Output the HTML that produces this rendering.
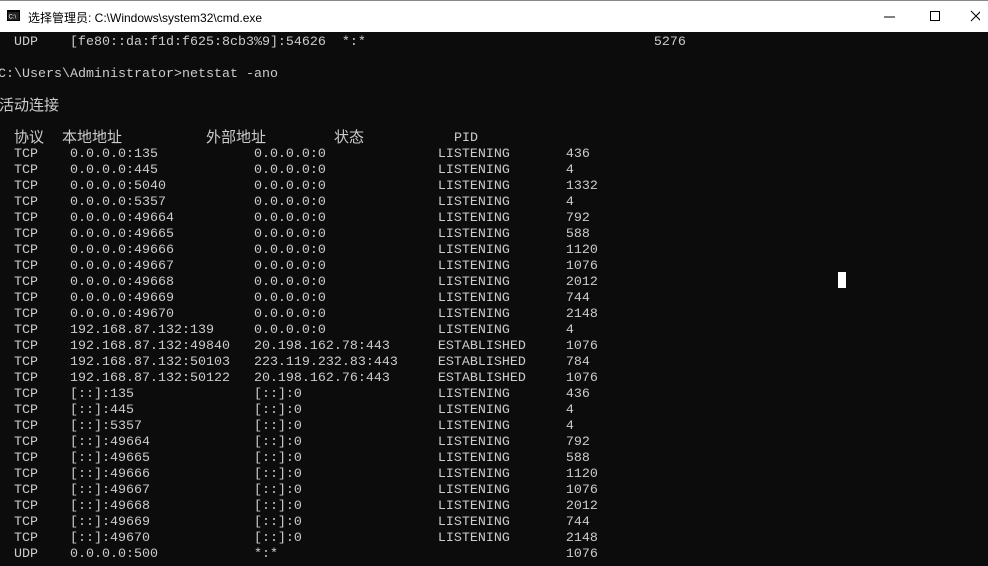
<!DOCTYPE html>
<html><head><meta charset="utf-8"><style>
body{margin:0;width:988px;height:566px;overflow:hidden;background:#0c0c0c;position:relative;font-family:"Liberation Mono",monospace}
#tb{position:absolute;left:0;top:0;width:988px;height:32px;background:#fff;border-top:1px solid #8a8a8a;box-sizing:border-box}
#tt{position:absolute;left:28px;top:8px;font:12px "Liberation Sans","Noto Sans CJK SC",sans-serif;color:#000}
#con{position:absolute;left:-2px;top:35px;margin:0;font-family:"Liberation Mono",monospace;font-size:13.3333px;letter-spacing:0;line-height:16px;color:#cccccc;white-space:pre}
.c{position:absolute;font-family:"Liberation Sans","Noto Sans CJK SC",sans-serif;font-size:15px;color:#ccc;line-height:16px}
</style></head><body>
<div id="tb">
<svg style="position:absolute;left:7px;top:9px" width="13" height="11"><rect width="13" height="11" fill="#000"/><rect x="1" y="2" width="11" height="8" fill="#222"/><text x="1.5" y="8.5" font-size="6" fill="#fff" font-family="Liberation Sans">C:\</text></svg>
<div id="tt">选择管理员: C:\Windows\system32\cmd.exe</div>
<svg style="position:absolute;left:880px;top:8px" width="100" height="16"><line x1="4" y1="8" x2="15" y2="8" stroke="#000"/><rect x="50.5" y="2.5" width="9" height="9" fill="none" stroke="#000"/><path d="M91 2L101 12M101 2L91 12" stroke="#000"/></svg>
</div>
<pre id="con">  UDP    [fe80::da:f1d:f625:8cb3%9]:54626  *:*                                    5276

C:\Users\Administrator>netstat -ano

 

 
  TCP    0.0.0.0:135            0.0.0.0:0              LISTENING       436
  TCP    0.0.0.0:445            0.0.0.0:0              LISTENING       4
  TCP    0.0.0.0:5040           0.0.0.0:0              LISTENING       1332
  TCP    0.0.0.0:5357           0.0.0.0:0              LISTENING       4
  TCP    0.0.0.0:49664          0.0.0.0:0              LISTENING       792
  TCP    0.0.0.0:49665          0.0.0.0:0              LISTENING       588
  TCP    0.0.0.0:49666          0.0.0.0:0              LISTENING       1120
  TCP    0.0.0.0:49667          0.0.0.0:0              LISTENING       1076
  TCP    0.0.0.0:49668          0.0.0.0:0              LISTENING       2012
  TCP    0.0.0.0:49669          0.0.0.0:0              LISTENING       744
  TCP    0.0.0.0:49670          0.0.0.0:0              LISTENING       2148
  TCP    192.168.87.132:139     0.0.0.0:0              LISTENING       4
  TCP    192.168.87.132:49840   20.198.162.78:443      ESTABLISHED     1076
  TCP    192.168.87.132:50103   223.119.232.83:443     ESTABLISHED     784
  TCP    192.168.87.132:50122   20.198.162.76:443      ESTABLISHED     1076
  TCP    [::]:135               [::]:0                 LISTENING       436
  TCP    [::]:445               [::]:0                 LISTENING       4
  TCP    [::]:5357              [::]:0                 LISTENING       4
  TCP    [::]:49664             [::]:0                 LISTENING       792
  TCP    [::]:49665             [::]:0                 LISTENING       588
  TCP    [::]:49666             [::]:0                 LISTENING       1120
  TCP    [::]:49667             [::]:0                 LISTENING       1076
  TCP    [::]:49668             [::]:0                 LISTENING       2012
  TCP    [::]:49669             [::]:0                 LISTENING       744
  TCP    [::]:49670             [::]:0                 LISTENING       2148
  UDP    0.0.0.0:500            *:*                                    1076</pre>
<div class="c" style="left:-1px;top:98px">活动连接</div>
<div class="c" style="left:14px;top:130px">协议</div>
<div class="c" style="left:62px;top:130px">本地地址</div>
<div class="c" style="left:206px;top:130px">外部地址</div>
<div class="c" style="left:334px;top:130px">状态</div>
<div class="c" style="left:454px;top:131px;font-family:'Liberation Mono',monospace;font-size:13.3333px">PID</div>
<div style="position:absolute;left:838px;top:272px;width:8px;height:16px;background:#fff"></div>
</body></html>
